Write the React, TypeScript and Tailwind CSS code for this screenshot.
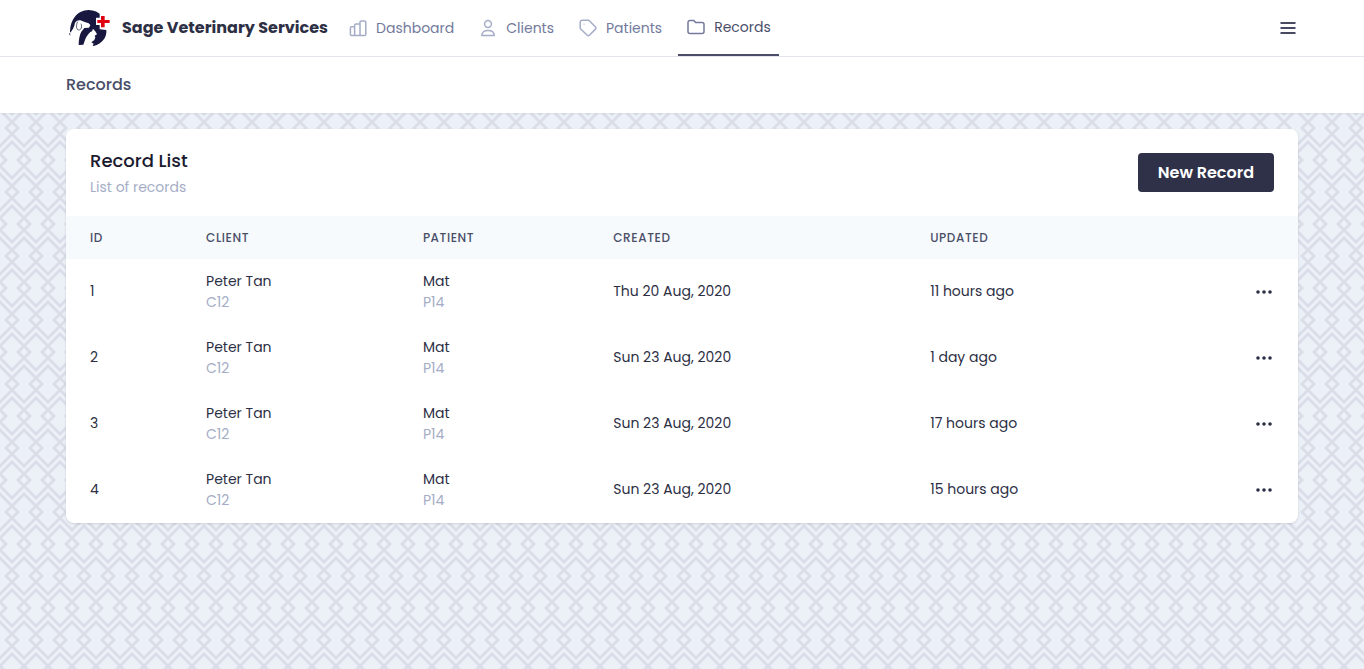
import type { ReactNode } from "react";

type IconProps = { children: ReactNode };

function NavIcon({ children }: IconProps) {
  return (
    <svg
      viewBox="0 0 20 20"
      className="size-5 shrink-0"
      fill="none"
      stroke="currentColor"
      strokeWidth="1.5"
      strokeLinecap="round"
      strokeLinejoin="round"
      aria-hidden="true"
    >
      {children}
    </svg>
  );
}

function Logo() {
  return (
    <svg viewBox="0 0 144 132" className="h-11 w-12 shrink-0" aria-hidden="true">
      <path
        fill="#17173f"
        d="M13 89C8 46 32 12 68 12c16 0 30 6 40 18l-3 9-12 1v15l12 3 1 12 15 2c2 22-12 41-38 48l-3-1 3-6-7-4 9-7 3-8-2-5 7-4-4-8-8-9-3 8-5 2c-7 7-13 15-16 24l-5 14-14 1c0-17 3-31 8-40l9-11 14-1 4-8-5-5-12-4-9-4c-8-3-15-1-20 6-2 13-8 24-18 34z"
      />
      <path
        d="M35 47c-4 8-5 17-1 23 3 4 10 2 12-4 1-4 1-9-1-13"
        fill="none"
        stroke="#17173f"
        strokeWidth="2"
      />
      <path fill="#fff" d="M101 23h19v11h15v22h-15v14h-19V57H90V35h11z" />
      <path fill="#df0012" d="M105 30h11v12h15v9h-15v13h-11V51H94v-9h11z" />
    </svg>
  );
}

const navItems = [
  {
    label: "Dashboard",
    icon: (
      <path d="M3.4 17.6h3.2V8.8H3.4a1 1 0 0 0-1 1v6.8a1 1 0 0 0 1 1zM6.6 17.6H12V6H8.1a1.5 1.5 0 0 0-1.5 1.5v10.1M12 17.6h4.5a1.3 1.3 0 0 0 1.3-1.3V4.2a1.3 1.3 0 0 0-1.3-1.3h-3.2A1.3 1.3 0 0 0 12 4.2V6" />
    ),
  },
  {
    label: "Clients",
    icon: (
      <>
        <circle cx="10" cy="6" r="3.4" />
        <path d="M3.8 17.6c0-3.4 2.3-5.2 6.2-5.2s6.2 1.8 6.2 5.2z" />
      </>
    ),
  },
  {
    label: "Patients",
    icon: (
      <>
        <path d="M4.2 2.2h6.1c.4 0 .8.2 1.1.5l6.1 6.3a1.5 1.5 0 0 1 0 2.1l-6.1 6.2a1.5 1.5 0 0 1-2.1 0L2.7 11a1.5 1.5 0 0 1-.5-1.1V4.2a2 2 0 0 1 2-2z" />
        <path strokeWidth="1.2" d="M6 6h.01" />
      </>
    ),
  },
  {
    label: "Records",
    active: true,
    icon: (
      <path d="M2 5.4a2 2 0 0 1 2-2h3.6l2.1 2.1H16a2 2 0 0 1 2 2v7.1a2 2 0 0 1-2 2H4a2 2 0 0 1-2-2z" />
    ),
  },
];

const records = [
  { id: 1, client: "Peter Tan", clientId: "C12", patient: "Mat", patientId: "P14", created: "Thu 20 Aug, 2020", updated: "11 hours ago" },
  { id: 2, client: "Peter Tan", clientId: "C12", patient: "Mat", patientId: "P14", created: "Sun 23 Aug, 2020", updated: "1 day ago" },
  { id: 3, client: "Peter Tan", clientId: "C12", patient: "Mat", patientId: "P14", created: "Sun 23 Aug, 2020", updated: "17 hours ago" },
  { id: 4, client: "Peter Tan", clientId: "C12", patient: "Mat", patientId: "P14", created: "Sun 23 Aug, 2020", updated: "15 hours ago" },
];

function DiamondBackground() {
  return (
    <svg className="absolute inset-0 -z-10 h-full w-full" aria-hidden="true">
      <defs>
        <pattern id="diamonds" width="48" height="64" patternUnits="userSpaceOnUse">
          <path
            fill="#dbdee9"
            fillRule="evenodd"
            d="M48 28v-4L36 12 24 24 12 12 0 24v4l4 4-4 4v4l12 12 12-12 12 12 12-12v-4l-4-4 4-4zM8 32l-6-6 10-10 10 10-6 6 6 6-10 10L2 38l6-6zm12 0l4-4 4 4-4 4-4-4zm12 0l-6-6 10-10 10 10-6 6 6 6-10 10-10-10 6-6zM0 16L10 6 4 0h4l4 4 4-4h4l-6 6 10 10L34 6l-6-6h4l4 4 4-4h4l-6 6 10 10v4L36 8 24 20 12 8 0 20v-4zm0 32l10 10-6 6h4l4-4 4 4h4l-6-6 10-10 10 10-6 6h4l4-4 4 4h4l-6-6 10-10v-4L36 56 24 44 12 56 0 44v4z"
          />
        </pattern>
      </defs>
      <rect width="100%" height="100%" fill="url(#diamonds)" />
    </svg>
  );
}

export default function App() {
  return (
    <div className="relative isolate min-h-screen bg-[#ecf0f7] font-[Poppins,Inter,sans-serif] text-[#2d2f45]">
      <DiamondBackground />

      <header className="border-b border-[#e2e4f0] bg-white">
        <div className="mx-auto flex h-14 max-w-7xl items-center px-6">
          <a href="#" className="flex items-center gap-2 text-base font-bold whitespace-nowrap">
            <Logo />
            Sage Veterinary Services
          </a>
          <nav className="ml-3 flex gap-2 self-stretch">
            {navItems.map((item) => (
              <a
                key={item.label}
                href="#"
                aria-current={item.active ? "page" : undefined}
                className={
                  item.active
                    ? "flex items-center gap-2 border-b-2 border-[#4a4e69] px-2 text-sm text-[#4a4e69]"
                    : "flex items-center gap-2 px-2 text-sm text-[#737a9c]"
                }
              >
                <span className={item.active ? "text-[#737a9c]" : "text-[#a5adc6]"}>
                  <NavIcon>{item.icon}</NavIcon>
                </span>
                {item.label}
              </a>
            ))}
          </nav>
          <button type="button" aria-label="Open menu" className="ml-auto text-[#4a4963]">
            <svg viewBox="0 0 20 20" className="size-5" fill="none" stroke="currentColor" strokeWidth="2" aria-hidden="true">
              <path d="M2.5 5h15M2.5 10h15M2.5 15h15" />
            </svg>
          </button>
        </div>
      </header>

      <div className="bg-white shadow-xs">
        <div className="mx-auto flex h-14 max-w-7xl items-center px-6">
          <h1 className="text-base font-medium text-[#4a4e69]">Records</h1>
        </div>
      </div>

      <main className="mx-auto max-w-7xl px-6 py-4">
        <section className="overflow-hidden rounded-lg bg-white shadow-sm">
          <div className="flex items-center justify-between px-6 py-5">
            <div>
              <h2 className="text-lg leading-6 font-medium text-[#1a1a2e]">Record List</h2>
              <p className="mt-[5px] text-sm leading-[18px] text-[#a5adc6]">List of records</p>
            </div>
            <button
              type="button"
              className="rounded-sm bg-[#2f3148] px-5 py-2 text-base leading-[23px] font-semibold text-white"
            >
              New Record
            </button>
          </div>

          <table className="w-full table-fixed text-left text-sm leading-5">
            <thead className="bg-[#f6fafd] text-xs leading-[19px] tracking-wider text-[#4a4e69] uppercase">
              <tr>
                <th className="w-[9.42%] px-6 py-3 font-medium">ID</th>
                <th className="w-[17.6%] px-6 py-3 font-medium">Client</th>
                <th className="w-[15.45%] px-6 py-3 font-medium">Patient</th>
                <th className="w-[25.73%] px-6 py-3 font-medium">Created</th>
                <th className="px-6 py-3 font-medium">Updated</th>
                <th className="w-24 px-6 py-3" aria-label="Actions" />
              </tr>
            </thead>
            <tbody>
              {records.map((record) => (
                <tr key={record.id}>
                  <td className="px-6 pt-3 pb-3.5">{record.id}</td>
                  <td className="px-6 py-3 leading-[21px]">
                    <div>{record.client}</div>
                    <div className="text-[#a5adc6]">{record.clientId}</div>
                  </td>
                  <td className="px-6 py-3 leading-[21px]">
                    <div>{record.patient}</div>
                    <div className="text-[#a5adc6]">{record.patientId}</div>
                  </td>
                  <td className="px-6 pt-3 pb-3.5">{record.created}</td>
                  <td className="px-6 pt-3 pb-3.5">{record.updated}</td>
                  <td className="px-6 py-3">
                    <button type="button" aria-label={`Actions for record ${record.id}`} className="ml-auto block">
                      <svg viewBox="0 0 20 20" className="size-5" fill="currentColor" aria-hidden="true">
                        <circle cx="4" cy="10" r="1.8" />
                        <circle cx="10" cy="10" r="1.8" />
                        <circle cx="16" cy="10" r="1.8" />
                      </svg>
                    </button>
                  </td>
                </tr>
              ))}
            </tbody>
          </table>
        </section>
      </main>
    </div>
  );
}
